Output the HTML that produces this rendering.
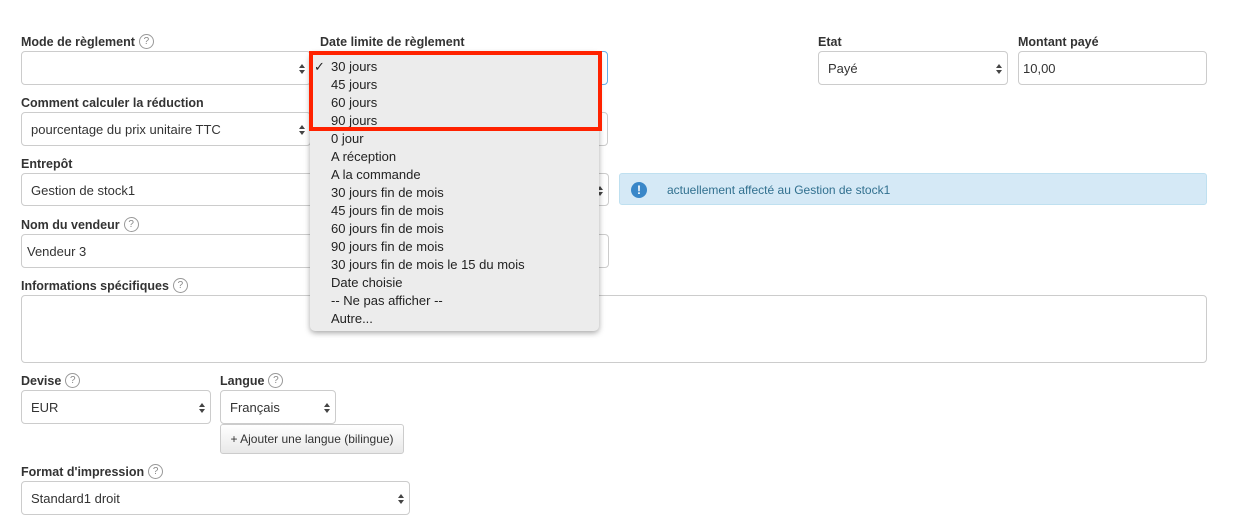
<!DOCTYPE html>
<html><head><meta charset="utf-8"><style>
body{margin:0;width:1248px;height:531px;background:#fff;font-family:"Liberation Sans",sans-serif;font-size:13px;color:#333;position:relative;overflow:hidden}
.a{position:absolute}
.l{position:absolute;font-weight:bold;font-size:12.5px;color:#333;line-height:16px}
.q{display:inline-block;width:13px;height:13px;border:1px solid #999;border-radius:50%;font-size:10px;line-height:13px;text-align:center;color:#888;font-weight:normal;vertical-align:top;margin-left:4px;margin-top:0px}
.in{position:absolute;box-sizing:border-box;border:1px solid #ccc;border-radius:4px;background:#fff;font-size:13px;line-height:34px;padding-left:9px;color:#333}
.s::after{content:"";position:absolute;right:5px;top:12px;width:0;height:0;border:3px solid transparent;border-bottom:4px solid #444;border-top:0}
.s::before{content:"";position:absolute;right:5px;top:18px;width:0;height:0;border:3px solid transparent;border-top:4px solid #444;border-bottom:0}
.dd{position:absolute;left:310px;top:52px;width:289px;height:279px;background:#ececec;border-radius:5px;box-shadow:0 2px 6px rgba(0,0,0,.35);font-size:13px;color:#222}
.dd div{position:absolute;left:21px;height:18px;line-height:20px}
</style></head><body>
<div class="l" style="left:21px;top:34px">Mode de règlement<span class="q">?</span></div>
<div class="in s" style="left:21px;top:51px;width:290px;height:34px"></div>
<div class="l" style="left:320px;top:34px">Date limite de règlement</div>
<div class="in" style="left:310px;top:51px;width:298px;height:34px;border-color:#66afe9"></div>
<div class="l" style="left:818px;top:34px">Etat</div>
<div class="in s" style="left:818px;top:51px;width:190px;height:34px">Payé</div>
<div class="l" style="left:1018px;top:34px">Montant payé</div>
<div class="in" style="left:1018px;top:51px;width:189px;height:34px;padding-left:4px">10,00</div>

<div class="l" style="left:21px;top:95px">Comment calculer la réduction</div>
<div class="in s" style="left:21px;top:112px;width:290px;height:34px">pourcentage du prix unitaire TTC</div>
<div class="in" style="left:310px;top:112px;width:298px;height:34px"></div>

<div class="l" style="left:21px;top:156px">Entrepôt</div>
<div class="in s" style="left:21px;top:173px;width:588px;height:33px">Gestion de stock1</div>
<div class="a" style="left:619px;top:173px;width:588px;height:32px;box-sizing:border-box;background:#d5e9f6;border:1px solid #bfe0f0;border-radius:3px;color:#31708f;font-size:12px;line-height:32px;padding-left:47px">actuellement affecté au Gestion de stock1
<div class="a" style="left:11px;top:8px;width:16px;height:16px;border-radius:50%;background:#3a87c8;color:#fff;font-weight:bold;font-size:12px;line-height:16px;text-align:center;padding:0">!</div></div>

<div class="l" style="left:21px;top:217px">Nom du vendeur<span class="q">?</span></div>
<div class="in" style="left:21px;top:234px;width:588px;height:34px;padding-left:5px">Vendeur 3</div>

<div class="l" style="left:21px;top:278px">Informations spécifiques<span class="q">?</span></div>
<div class="in" style="left:21px;top:295px;width:1186px;height:68px"></div>

<div class="l" style="left:21px;top:373px">Devise<span class="q">?</span></div>
<div class="in s" style="left:21px;top:390px;width:190px;height:34px">EUR</div>
<div class="l" style="left:220px;top:373px">Langue<span class="q">?</span></div>
<div class="in s" style="left:220px;top:390px;width:116px;height:34px">Français</div>
<div class="a" style="left:220px;top:424px;width:184px;height:30px;box-sizing:border-box;border:1px solid #ccc;border-radius:3px;background:linear-gradient(#fff,#e8e8e8);font-size:12px;line-height:29px;text-align:center;color:#333">+ Ajouter une langue (bilingue)</div>

<div class="l" style="left:21px;top:464px">Format d'impression<span class="q">?</span></div>
<div class="in s" style="left:21px;top:481px;width:389px;height:34px">Standard1 droit</div>

<div class="dd">
<div style="left:4px;top:5px">✓</div>
<div style="top:5px">30 jours</div><div style="top:23px">45 jours</div><div style="top:41px">60 jours</div><div style="top:59px">90 jours</div>
<div style="top:77px">0 jour</div><div style="top:95px">A réception</div><div style="top:113px">A la commande</div>
<div style="top:131px">30 jours fin de mois</div><div style="top:149px">45 jours fin de mois</div><div style="top:167px">60 jours fin de mois</div>
<div style="top:185px">90 jours fin de mois</div><div style="top:203px">30 jours fin de mois le 15 du mois</div>
<div style="top:221px">Date choisie</div><div style="top:239px">-- Ne pas afficher --</div><div style="top:257px">Autre...</div>
</div>
<div class="a" style="left:309px;top:51px;width:293px;height:80px;box-sizing:border-box;border:4px solid #ff2200"></div>
</body></html>
